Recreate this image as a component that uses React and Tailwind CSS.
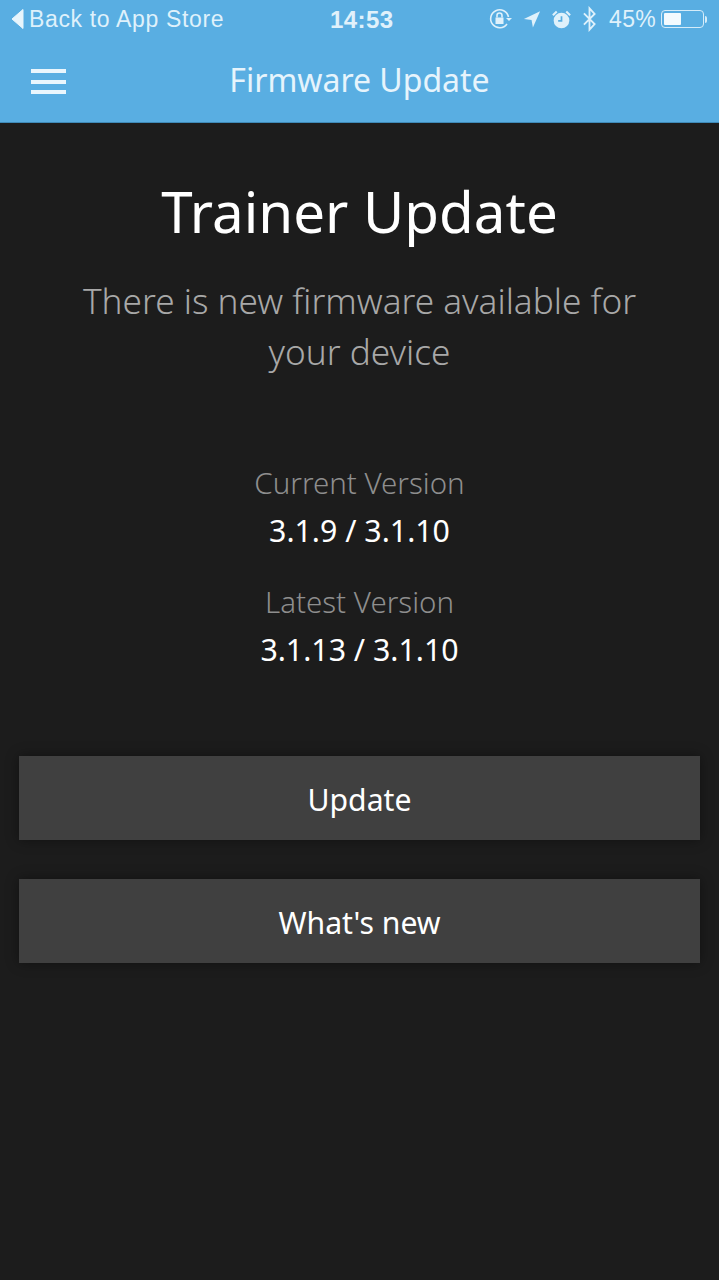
export default function App() {
  return (
    <div className="w-[719px] h-[1280px] bg-[#1c1c1c] flex flex-col overflow-hidden font-['Noto_Sans',sans-serif]">
      <header className="h-[123px] bg-[#59aee2] flex flex-col text-white shrink-0 border-b border-b-[#3f8ab8]">
        <div className="h-[38px] flex items-center justify-between pl-[11px] pr-[12px] relative">
          <div className="flex items-center gap-[5px]">
            <svg width="13" height="20" viewBox="0 0 13 20"><path d="M12 0.5V19.5L1 10Z" fill="#e8f5fc" stroke="#e8f5fc" strokeLinejoin="round" /></svg>
            <span className="text-[23px] leading-none tracking-[0.65px] text-[#dff1fb] font-['Liberation_Sans',sans-serif]">Back to App Store</span>
          </div>
          <span className="absolute left-[330px] top-[8px] text-[24px] leading-none font-bold tracking-[0.4px] text-[#e0f1fb] font-['Liberation_Sans',sans-serif]">14:53</span>
          <div className="flex items-center text-[#dff1fb]">
            <svg width="24" height="24" viewBox="0 0 24 24" fill="none" stroke="currentColor" strokeWidth="1.6">
              <path d="M20.5 10A9 9 0 1 0 19 17" />
              <path d="M18 11h6l-3 3z" fill="currentColor" stroke="none" />
              <rect x="7.5" y="10.5" width="8" height="6.5" fill="currentColor" stroke="none" />
              <path d="M9 10.5V8.5a2.5 2.5 0 0 1 5 0v2" />
            </svg>
            <svg className="ml-[11px]" width="18" height="18" viewBox="0 0 20 20"><path d="M19 1.5L1 10l8.5 1L11 19.5z" fill="currentColor" /></svg>
            <svg className="ml-[10px]" width="21" height="21" viewBox="0 0 22 22" fill="none" stroke="currentColor">
              <circle cx="11" cy="12" r="8.2" fill="currentColor" stroke="none" />
              <path d="M11 7.5V12.5H7.5" stroke="#59aee2" strokeWidth="1.8" />
              <path d="M2 6.5L6 2.5M20 6.5L16 2.5" strokeWidth="2.2" />
            </svg>
            <svg className="ml-[10px]" width="15" height="26" viewBox="0 0 15 28" fill="none" stroke="currentColor" strokeWidth="2">
              <path d="M1.5 8L13 19.5 7.5 25.5V2.5L13 8.5 1.5 20" />
            </svg>
            <span className="ml-[12px] text-[23px] leading-none tracking-[0.3px] font-['Liberation_Sans',sans-serif]">45%</span>
            <div className="ml-[5px] w-[43px] h-[18px] rounded-[4px] border border-[#d5ecf9] p-[2px] flex">
              <div className="w-[17px] bg-[#f2fafe] rounded-[1px]" />
            </div>
            <div className="ml-[1px] w-[2px] h-[7px] bg-[#d5ecf9] rounded-r-sm" />
          </div>
        </div>
        <div className="flex-1 relative flex items-center justify-center pb-[1px]">
          <div className="absolute left-[31px] top-[31px] w-[35px] flex flex-col gap-[6.5px]">
            <div className="h-[4px] bg-[#eaf6fd]" />
            <div className="h-[4px] bg-[#eaf6fd]" />
            <div className="h-[4px] bg-[#eaf6fd]" />
          </div>
          <span className="text-[32px] leading-none text-[#e6f4fc]">Firmware Update</span>
        </div>
      </header>
      <main className="flex flex-col items-center text-center">
        <h1 className="mt-[56px] text-[56.5px] leading-[66px] text-white">Trainer Update</h1>
        <p className="mt-[30px] w-[600px] text-[35.2px] leading-[51px] font-light text-[#a8a8a8]">There is new firmware available for your device</p>
        <div className="mt-[84px] text-[29.5px] leading-[44px] font-light text-[#8e8e8e]">Current Version</div>
        <div className="mt-[4px] text-[30.3px] leading-[44px] text-white">3.1.9 / 3.1.10</div>
        <div className="mt-[27px] text-[29.5px] leading-[44px] font-light text-[#8e8e8e]">Latest Version</div>
        <div className="mt-[4px] text-[30.3px] leading-[44px] text-white">3.1.13 / 3.1.10</div>
      </main>
      <div className="mt-[84px] px-[19px] flex flex-col gap-[39px]">
        <button className="h-[84px] pt-[4px] bg-[#404040] text-[30.2px] text-white shadow-[0_0_12px_rgba(0,0,0,0.4)]">Update</button>
        <button className="h-[84px] pt-[4px] bg-[#404040] text-[30.2px] text-white shadow-[0_0_12px_rgba(0,0,0,0.4)]">What's new</button>
      </div>
    </div>
  );
}
